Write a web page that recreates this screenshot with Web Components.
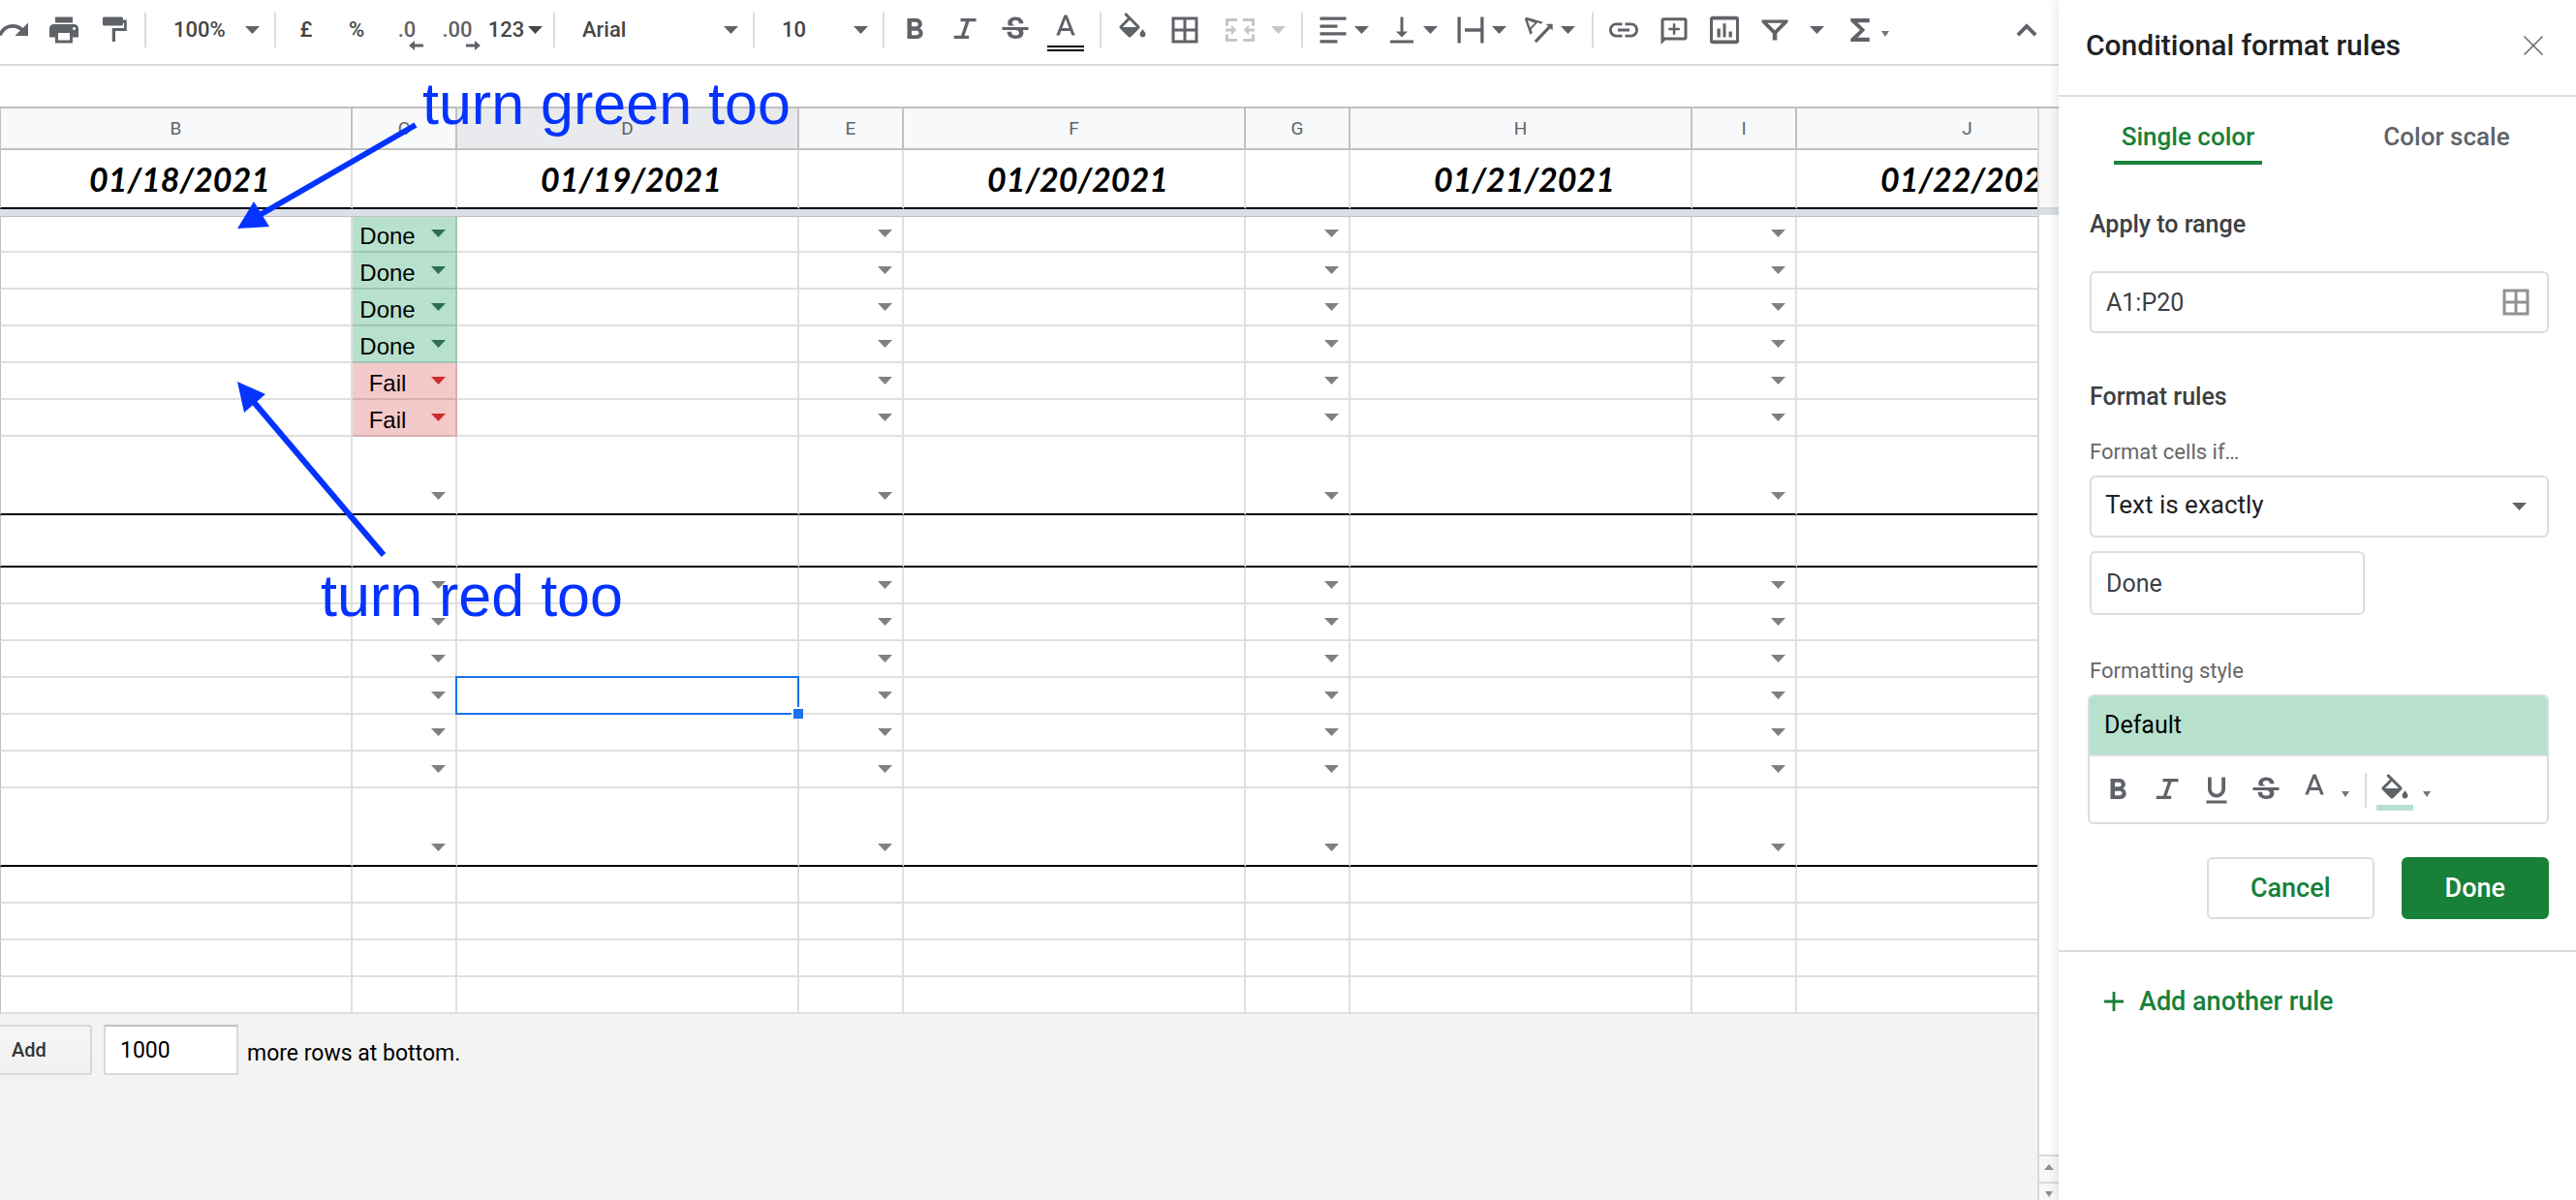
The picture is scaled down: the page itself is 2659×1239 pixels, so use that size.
<!DOCTYPE html>
<html lang="en">
<head>
<meta charset="utf-8">
<title>Spreadsheet</title>
<style>
    body {
        margin: 0;
        font-family: Roboto, "Liberation Sans", sans-serif;
        color: #202124;
        background: #fff;
    }
</style>
</head>
<body>
<sheet-app></sheet-app>

<script>
// Icon artwork, keyed by name: [viewBox width, viewBox height, markup]
const ICONS = {
    redo: [24, 24, '<path d="M18.4 10.6C16.55 8.99 14.15 8 11.5 8c-4.65 0-8.58 3.03-9.96 7.22L3.9 16c1.05-3.19 4.05-5.5 7.6-5.5 1.95 0 3.73.72 5.12 1.88L13 16h9V7l-3.6 3.6z"/>'],
    print: [24, 24, '<path d="M19 8H5c-1.66 0-3 1.34-3 3v6h4v4h12v-4h4v-6c0-1.66-1.34-3-3-3zm-3 11H8v-5h8v5zm3-7c-.55 0-1-.45-1-1s.45-1 1-1 1 .45 1 1-.45 1-1 1zm-1-9H6v4h12V3z"/>'],
    paint: [24, 24, '<path d="M18 5V4c0-.55-.45-1-1-1H5c-.55 0-1 .45-1 1v4c0 .55.45 1 1 1h12c.55 0 1-.45 1-1V7h.7v3.6H10.500V20h2.200v-7.300H20.500V5z"/>'],
    bold: [24, 24, '<path d="M15.6 10.79c.97-.67 1.65-1.77 1.65-2.79 0-2.26-1.75-4-4-4H7v14h7.04c2.09 0 3.71-1.7 3.71-3.79 0-1.52-.86-2.82-2.15-3.42zM10 6.5h3c.83 0 1.5.67 1.5 1.5s-.67 1.5-1.5 1.5h-3v-3zm3.5 9H10v-3h3.5c.83 0 1.500.67 1.500 1.500s-.67 1.500-1.500 1.500z"/>'],
    italic: [24, 24, '<path d="M9 4v2.200h3.600L9.300 15.800H4.500V18h10.300v-2.200h-3.100L15 6.200h4.700V4z"/>'],
    underline: [24, 24, '<path d="M12 17c3.310 0 6-2.690 6-6V3h-2.500v8c0 1.930-1.570 3.500-3.500 3.500S8.500 12.930 8.500 11V3H6v8c0 3.310 2.690 6 6 6zm-7 2v2h14v-2H5z"/>'],
    strike: [24, 24, '<path d="M7.24 8.75c-.26-.48-.39-1.03-.39-1.67 0-.61.13-1.16.4-1.67.26-.5.63-.93 1.11-1.29.48-.35 1.05-.63 1.7-.83.66-.19 1.39-.29 2.18-.29.81 0 1.54.11 2.21.34.66.22 1.23.54 1.69.94.47.4.83.88 1.08 1.43.25.55.38 1.15.38 1.81h-3.01c0-.31-.05-.59-.15-.85-.09-.27-.24-.49-.44-.68-.2-.19-.45-.33-.75-.44-.3-.1-.66-.16-1.06-.16-.39 0-.74.04-1.03.13-.29.09-.53.21-.72.36-.19.16-.34.34-.44.55-.1.21-.15.43-.15.66 0 .48.25.88.74 1.21.38.25.77.48 1.41.7H7.39c-.05-.08-.11-.17-.15-.25zM21 12v-2H3v2h9.62c.18.07.4.14.55.2.37.17.66.34.87.51.21.17.35.36.43.57.07.2.11.43.11.69 0 .23-.05.45-.14.66-.09.2-.23.38-.42.53-.19.15-.42.26-.71.35-.29.08-.63.13-1.01.13-.43 0-.83-.04-1.18-.13s-.66-.23-.91-.42c-.25-.19-.45-.44-.59-.75-.14-.31-.25-.76-.25-1.21H6.4c0 .55.08 1.13.24 1.58.16.45.37.85.65 1.21.28.35.6.66.98.92.37.26.78.48 1.22.65.44.17.9.3 1.38.39.48.08.96.13 1.44.13.8 0 1.53-.09 2.18-.28s1.21-.45 1.67-.79c.46-.34.82-.77 1.07-1.27s.38-1.07.38-1.71c0-.6-.1-1.14-.31-1.61-.05-.11-.11-.23-.17-.33H21z"/>'],
    color: [24, 24, '<path d="M11 3 5.500 17h2.250l1.120-3h6.250l1.120 3h2.250L13 3h-2zm-1.380 9L12 5.670 14.380 12H9.620z"/>'],
    fill: [24, 24, '<path d="M16.560 8.940 7.620 0 6.210 1.410l2.380 2.380-5.150 5.150c-.59.59-.59 1.540 0 2.120l5.500 5.500c.29.29.68.44 1.060.44s.77-.15 1.060-.44l5.500-5.500c.59-.58.59-1.530 0-2.120zM5.210 10 10 5.210 14.790 10H5.210zM19 11.500s-2 2.170-2 3.500c0 1.100.9 2 2 2s2-.9 2-2c0-1.330-2-3.500-2-3.500z"/>'],
    borders: [24, 24, '<path d="M3 3v18h18V3H3zm8 16H5v-6h6v6zm0-8H5V5h6v6zm8 8h-6v-6h6v6zm0-8h-6V5h6v6z"/>'],
    merge: [24, 24, '<path d="M2 4h8v2H4v3H2zM14 4h8v5h-2V6h-6zM2 15h2v3h6v2H2zM20 15h2v5h-8v-2h6zM2 11h4V8.500L9.500 12 6 15.500V13H2zM22 11h-4V8.500L14.500 12l3.500 3.500V13h4z"/>'],
    left: [24, 24, '<path d="M3 3h18v2.200H3zM3 8.300h12v2.200H3zM3 13.500h18v2.200H3zM3 18.800h12V21H3z"/>'],
    bottom: [24, 24, '<path d="M16 13h-3V3h-2v10H8l4 4 4-4zM4 19v2h16v-2H4z"/>'],
    overflow: [24, 24, '<path d="M3 3h2.200v18H3zM18.800 3H21v18h-2.200zM8 10.900h11v2.200H8z"/>'],
    rotate: [24, 24, '<path d="M16.500 7.800l1.500 1.600-9.500 10 1.500 1.400 9.500-10 1.600 1.500V7.800zM3 3.200l-1.100 1.200 3.800 11 1.500-1.500-.9-2.400 4.500-4.600 2.300 1 1.400-1.400zm.9 2.100 5 1.800-3.300 3.300z"/>'],
    link: [24, 24, '<path d="M3.900 12c0-1.710 1.390-3.100 3.100-3.100h4V7H7c-2.760 0-5 2.240-5 5s2.240 5 5 5h4v-1.900H7c-1.710 0-3.100-1.390-3.100-3.100zM8 13h8v-2H8v2zm9-6h-4v1.900h4c1.710 0 3.100 1.390 3.100 3.100s-1.390 3.100-3.100 3.100h-4V17h4c2.760 0 5-2.240 5-5s-2.240-5-5-5z"/>'],
    comment: [24, 24, '<path fill-rule="evenodd" d="M4.500 3.500h15c.8 0 1.500.7 1.500 1.500v12.500c0 .8-.7 1.500-1.500 1.500H6l-3 3V5c0-.8.7-1.500 1.500-1.500zM5 5.500V17h14V5.500zM11.200 7.500h1.700v3h3v1.700h-3v3h-1.700v-3h-3v-1.700h3z"/>'],
    chart: [24, 24, '<path fill-rule="evenodd" d="M4 2.500h16c1 0 2 .7 2 1.600v15.800c0 .9-1 1.600-2 1.600H4c-1 0-2-.7-2-1.600V4.100c0-.9 1-1.600 2-1.600zM4 5v14h16V5zM7 11h2.200v6H7zM11 7.500h2V17h-2zM15 13h2.200v4H15z"/>'],
    filter: [24, 24, '<path fill-rule="evenodd" d="M3 5h18v1.700l-7.500 7.600V19h-3v-4.700L3 6.700zM7 7.200l5 5 5-5z"/>'],
    sum: [24, 24, '<path d="M18.500 4H5.500v2l6.500 6-6.500 6v2h13v-2.800H10.300l5.200-5.200-5.200-5.200h8.200z"/>'],
    up: [24, 24, '<path d="M12 7.500l-7 7L6.800 16.400 12 11.200l5.200 5.200L19 14.500z"/>'],
    close: [20, 20, '<path d="M1 0 10 9l9-9 1 1-9 9 9 9-1 1-9-9-9 9-1-1 9-9-9-9z"/>'],
    plus: [20, 20, '<path d="M8.600 0h2.800v8.600H20v2.800h-8.600V20H8.600v-8.600H0V8.600h8.600z"/>'],
    down: [15, 8, '<path d="M0 0h15L7.500 8z"/>'],
    mini: [8, 6, '<path d="M0 0h8L4 6z"/>'],
    rise: [10, 6, '<path d="M0 6h10L5 0z"/>'],
    moveLeft: [15, 10, '<path d="M0 5l6-5v3.500h9v3H6V10z"/>'],
    moveRight: [15, 10, '<path d="M15 5 9 0v3.500H0v3h9V10z"/>']
};

class UiIcon extends HTMLElement {
    connectedCallback() {
        const [w, h, art] = ICONS[this.getAttribute('name')];
        const scale = w === 24 ? 36 / 24 : 1;
        this.attachShadow({ mode: 'open' }).innerHTML = `
            <style>
                :host { display: block; flex: none; }
                svg { display: block; fill: currentColor; }
            </style>
            <svg width="${w * scale}" height="${h * scale}" viewBox="0 0 ${w} ${h}" aria-hidden="true">${art}</svg>
        `;
    }
}
customElements.define('ui-icon', UiIcon);

// Button for toolbars; the "arrow" attribute adds a drop-down arrow
class ToolButton extends HTMLElement {
    connectedCallback() {
        const arrow = this.getAttribute('arrow');
        this.attachShadow({ mode: 'open' }).innerHTML = `
            <style>
                :host { display: block; flex: none; width: 52px; color: #5f6368; }
                :host([arrow]) { width: 71px; }
                :host([size="54"]) { width: 54px; }
                :host([size="68"]) { width: 68px; }
                :host([size="88"]) { width: 88px; }
                :host([size="34"]) { width: 34px; }
                :host([disabled]) { color: #c4c6c8; }
                button {
                    display: flex;
                    align-items: center;
                    justify-content: center;
                    gap: var(--arrow-gap, 4px);
                    width: 100%;
                    height: 48px;
                    padding: 0;
                    border: 0;
                    background: none;
                    color: inherit;
                    font: 500 22px/26px Roboto, sans-serif;
                }
                :host([size="88"]) button { gap: 14px; }
                .mini { padding-top: 8px; color: #777; }
            </style>
            <button type="button" aria-label="${this.getAttribute('label')}" ${this.hasAttribute('disabled') ? 'disabled' : ''}>
                <slot></slot>${arrow ? `<ui-icon class="${arrow}" name="${arrow}"></ui-icon>` : ''}
            </button>
        `;
    }
}
customElements.define('tool-button', ToolButton);

// Drop-down without the native arrow
class ToolSelect extends HTMLElement {
    connectedCallback() {
        this.attachShadow({ mode: 'open' }).innerHTML = `
            <style>
                :host { display: grid; flex: none; width: 122px; align-items: center; color: #444746; }
                :host([size="font"]) { width: 194px; }
                select {
                    grid-area: 1 / 1;
                    appearance: none;
                    width: 100%;
                    height: 48px;
                    padding: 0 23px;
                    border: 0;
                    background: none;
                    color: inherit;
                    font: 500 22px/26px Roboto, sans-serif;
                }
                ui-icon { grid-area: 1 / 1; justify-self: end; margin-right: 10px; color: #5f6368; pointer-events: none; }
            </style>
            <select aria-label="${this.getAttribute('label')}"><option>${this.getAttribute('value')}</option></select>
            <ui-icon name="down"></ui-icon>
        `;
    }
}
customElements.define('tool-select', ToolSelect);

class ToolBar extends HTMLElement {
    constructor() {
        super();
        this.attachShadow({ mode: 'open' }).innerHTML = `
            <style>
                :host {
                    display: flex;
                    align-items: center;
                    height: 62px;
                    padding-bottom: 4px;
                    border-bottom: 2px solid #dadce0;
                    overflow: hidden;
                }
                .group { display: flex; align-items: center; }
                .group:first-of-type { margin-left: -12px; }
                .group + .group::before {
                    content: "";
                    width: 2px;
                    height: 36px;
                    margin: 0 5px;
                    background: #dadce0;
                }
                .spaced { margin-right: 4px; }
                .text { color: #444746; }
                .decimal { display: grid; justify-items: end; padding-top: 8px; }
                .decimal ui-icon { margin: -2px -8px 0 0; }
                .swatch { display: grid; justify-items: center; padding-top: 2px; }
                .swatch::after {
                    content: "";
                    width: 38px;
                    height: 2px;
                    border: solid #000;
                    border-width: 2px 0;
                }
                .end { margin-left: auto; margin-right: 16px; }
            </style>
            <div class="group">
                <tool-button label="Redo"><ui-icon name="redo"></ui-icon></tool-button>
                <tool-button label="Print"><ui-icon name="print"></ui-icon></tool-button>
                <tool-button label="Paint format"><ui-icon name="paint"></ui-icon></tool-button>
            </div>
            <div class="group"><tool-select label="Zoom" value="100%"></tool-select></div>
            <div class="group">
                <tool-button class="text" label="Currency">£</tool-button>
                <tool-button class="text" label="Percent">%</tool-button>
                <tool-button label="Fewer decimals"><span class="decimal">.0<ui-icon name="moveLeft"></ui-icon></span></tool-button>
                <tool-button label="More decimals"><span class="decimal">.00<ui-icon name="moveRight"></ui-icon></span></tool-button>
                <tool-button class="text" label="More formats" arrow="down" size="68">123</tool-button>
            </div>
            <div class="group"><tool-select label="Font" size="font" value="Arial"></tool-select></div>
            <div class="group"><tool-select label="Font size" value="10"></tool-select></div>
            <div class="group spaced">
                <tool-button label="Bold"><ui-icon name="bold"></ui-icon></tool-button>
                <tool-button label="Italic"><ui-icon name="italic"></ui-icon></tool-button>
                <tool-button label="Strikethrough"><ui-icon name="strike"></ui-icon></tool-button>
                <tool-button label="Text color"><span class="swatch"><ui-icon name="color"></ui-icon></span></tool-button>
            </div>
            <div class="group">
                <tool-button label="Fill color" size="54"><ui-icon name="fill"></ui-icon></tool-button>
                <tool-button label="Borders" size="54"><ui-icon name="borders"></ui-icon></tool-button>
                <tool-button label="Merge cells" size="88" arrow="down" disabled><ui-icon name="merge"></ui-icon></tool-button>
            </div>
            <div class="group spaced">
                <tool-button label="Horizontal align" arrow="down"><ui-icon name="left"></ui-icon></tool-button>
                <tool-button label="Vertical align" arrow="down"><ui-icon name="bottom"></ui-icon></tool-button>
                <tool-button label="Text wrapping" arrow="down"><ui-icon name="overflow"></ui-icon></tool-button>
                <tool-button label="Text rotation" arrow="down"><ui-icon name="rotate"></ui-icon></tool-button>
            </div>
            <div class="group">
                <tool-button label="Insert link"><ui-icon name="link"></ui-icon></tool-button>
                <tool-button label="Insert comment"><ui-icon name="comment"></ui-icon></tool-button>
                <tool-button label="Insert chart"><ui-icon name="chart"></ui-icon></tool-button>
                <tool-button label="Filter"><ui-icon name="filter"></ui-icon></tool-button>
                <tool-button label="Filter views" size="34"><ui-icon name="down"></ui-icon></tool-button>
                <tool-button label="Functions" arrow="mini" size="68"><ui-icon name="sum"></ui-icon></tool-button>
            </div>
            <tool-button class="end" label="Hide menus" size="34"><ui-icon name="up"></ui-icon></tool-button>
        `;
    }
}
customElements.define('tool-bar', ToolBar);

// Cell value with the list arrow of data validation
class CellPicker extends HTMLElement {
    connectedCallback() {
        const value = this.getAttribute('value') || '';
        this.attachShadow({ mode: 'open' }).innerHTML = `
            <style>
                :host {
                    display: flex;
                    align-items: flex-end;
                    height: 34px;
                    color: #808080;
                }
                :host([value="Done"]) { color: #2f6e50; }
                :host([value="Fail"]) { color: #d02c2c; }
                span {
                    flex: 1;
                    padding-bottom: 1px;
                    color: #000;
                    font: 24px/28px "Liberation Sans", Arial, sans-serif;
                    text-align: center;
                }
                button {
                    padding: 0 10px 14px 9px;
                    border: 0;
                    background: none;
                    color: inherit;
                }
            </style>
            <span>${value}</span>
            <button type="button" aria-label="Open list"><ui-icon name="down"></ui-icon></button>
        `;
    }
}
customElements.define('cell-picker', CellPicker);

const COLUMNS = ['B', 'C', 'D', 'E', 'F', 'G', 'H', 'I', 'J'];
const DATES = { B: '01/18/2021', D: '01/19/2021', F: '01/20/2021', H: '01/21/2021', J: '01/22/2021' };

// kind: list = row with pickers, tall/thick set the height and bottom rule
const ROWS = [
    { kind: 'list first', value: 'Done' },
    { kind: 'list', value: 'Done' },
    { kind: 'list', value: 'Done' },
    { kind: 'list', value: 'Done' },
    { kind: 'list', value: 'Fail' },
    { kind: 'list', value: 'Fail' },
    { kind: 'list tall thick' },
    { kind: 'gap thick' },
    { kind: 'list' },
    { kind: 'list' },
    { kind: 'list' },
    { kind: 'list', selected: 'D' },
    { kind: 'list' },
    { kind: 'list' },
    { kind: 'list tall thick' },
    { kind: '' },
    { kind: '' },
    { kind: '' },
    { kind: '' }
];

class SheetGrid extends HTMLElement {
    constructor() {
        super();
        this.attachShadow({ mode: 'open' }).innerHTML = `
            <style>
                :host { display: block; overflow: hidden; background: #f3f3f3; }
                table {
                    width: 2208px;
                    table-layout: fixed;
                    border-collapse: separate;
                    border-spacing: 0;
                    background: #fff;
                }
                .first-col { width: 364px; }
                .wide { width: 353px; }
                .slim { width: 108px; }
                th, td {
                    box-sizing: border-box;
                    height: 38px;
                    padding: 0;
                    border: solid rgba(0, 0, 0, .12);
                    border-width: 0 2px 2px 0;
                    vertical-align: bottom;
                }
                th:first-child, td:first-child { border-left: 1px solid #c0c0c0; }
                thead th {
                    height: 43px;
                    border-color: #c0c0c0;
                    background: #f8f9fa;
                    color: #5f6368;
                    font: 19px/24px Roboto, sans-serif;
                    vertical-align: middle;
                }
                thead th.active { background: #e8eaed; }
                .dates td {
                    height: 61px;
                    padding-left: 8px;
                    border-bottom-color: #000;
                    color: #000;
                    font: italic 700 34px/40px Lato, sans-serif;
                    text-align: center;
                    vertical-align: middle;
                }
                .freeze td {
                    height: 8px;
                    border: 0;
                    border-bottom: 1px solid #c0c0c0;
                    background: #dcdfea;
                }
                .first td { height: 37px; }
                .tall td { height: 81px; }
                .gap td { height: 54px; }
                .thick td { border-bottom-color: #000; }
                .done { background: #b7e1cd; }
                .fail { background: #f4c9c9; }
                .selected { position: relative; }
                .selected::before {
                    content: "";
                    position: absolute;
                    inset: -2px;
                    border: 2px solid #1a73e8;
                }
                .selected::after {
                    content: "";
                    position: absolute;
                    right: -6px;
                    bottom: -6px;
                    width: 10px;
                    height: 10px;
                    border: solid #fff;
                    border-width: 2px 0 0 2px;
                    background: #1a73e8;
                }
            </style>
            <table>
                <colgroup>${COLUMNS.map((c, i) => `<col class="${i === 0 ? 'first-col' : i % 2 ? 'slim' : 'wide'}">`).join('')}</colgroup>
                <thead><tr>${COLUMNS.map(c => `<th scope="col" class="${c === 'D' ? 'active' : ''}">${c}</th>`).join('')}</tr></thead>
                <tbody>
                    <tr class="dates">${COLUMNS.map(c => `<td>${DATES[c] || ''}</td>`).join('')}</tr>
                    <tr class="freeze"><td colspan="9"></td></tr>
                    ${ROWS.map(row => this.renderRow(row)).join('')}
                </tbody>
            </table>
            <slot></slot>
        `;
    }

    renderRow(row) {
        const cells = COLUMNS.map((column, i) => {
            const value = column === 'C' && row.value ? row.value : '';
            const name = value ? value.toLowerCase() : row.selected === column ? 'selected' : '';
            const picker = i % 2 && row.kind.includes('list') ? `<cell-picker value="${value}"></cell-picker>` : '';
            return `<td class="${name}">${picker}</td>`;
        });
        return `<tr class="${row.kind}">${cells.join('')}</tr>`;
    }
}
customElements.define('sheet-grid', SheetGrid);

class AddRows extends HTMLElement {
    constructor() {
        super();
        this.attachShadow({ mode: 'open' }).innerHTML = `
            <style>
                :host { display: flex; align-items: center; padding-top: 11px; color: #000; }
                button, input { box-sizing: border-box; height: 52px; border: 2px solid #d9d9d9; }
                button {
                    width: 105px;
                    margin-left: -10px;
                    padding: 0 20px;
                    border-radius: 3px;
                    background: linear-gradient(#f5f5f5, #f1f1f1);
                    color: #333;
                    font: 500 20px/24px Roboto, sans-serif;
                    text-align: left;
                }
                input {
                    width: 139px;
                    margin: 0 9px 0 12px;
                    padding: 0 15px;
                    border-top-color: #c0c0c0;
                    background: #fff;
                    color: #000;
                    font: 23px/28px Roboto, sans-serif;
                }
                label { padding-top: 8px; font-size: 23px; line-height: 28px; }
            </style>
            <button type="button">Add</button>
            <input id="count" value="1000">
            <label for="count">more rows at bottom.</label>
        `;
    }
}
customElements.define('add-rows', AddRows);

class SheetScroll extends HTMLElement {
    constructor() {
        super();
        this.attachShadow({ mode: 'open' }).innerHTML = `
            <style>
                :host {
                    display: flex;
                    flex-direction: column;
                    width: 20px;
                    border-left: 2px solid #d9d9d9;
                }
                .head { height: 102px; border-bottom: 2px solid #d9d9d9; background: #f8f8f8; }
                .band { height: 6px; background: #dadfe8; }
                .track { flex: 1; }
                button {
                    display: flex;
                    justify-content: center;
                    box-sizing: border-box;
                    height: 28px;
                    padding: 8px 0 0;
                    border: 0;
                    border-top: 2px solid #d9d9d9;
                    background: #f8f8f8;
                    color: #909090;
                }
                button:last-child { height: 19px; }
            </style>
            <div class="head"></div>
            <div class="band"></div>
            <div class="track"></div>
            <button type="button" aria-label="Scroll up"><ui-icon name="rise"></ui-icon></button>
            <button type="button" aria-label="Scroll down"><ui-icon name="mini"></ui-icon></button>
        `;
    }
}
customElements.define('sheet-scroll', SheetScroll);

// Hand-placed remarks that float over the sheet
class SheetNotes extends HTMLElement {
    constructor() {
        super();
        this.attachShadow({ mode: 'open' }).innerHTML = `
            <style>
                :host {
                    position: absolute;
                    top: 0;
                    left: 0;
                    color: #0433ff;
                    font: 61px/68px "Liberation Sans", Arial, sans-serif;
                    white-space: nowrap;
                    pointer-events: none;
                }
                svg { display: block; fill: currentColor; stroke: currentColor; }
                span { position: absolute; }
                .green { top: 73px; left: 436px; }
                .red { top: 581px; left: 331px; }
            </style>
            <svg width="700" height="660" viewBox="0 0 700 660" aria-hidden="true">
                <path d="M429 129 268 222M396 573 261 414" stroke-width="6"/>
                <path d="M245 236 262 208 278 234zM245 394 274 407 252 426z" stroke="none"/>
            </svg>
            <span class="green">turn green too</span>
            <span class="red">turn red too</span>
        `;
    }
}
customElements.define('sheet-notes', SheetNotes);

class RulesPanel extends HTMLElement {
    constructor() {
        super();
        this.attachShadow({ mode: 'open' }).innerHTML = `
            <style>
                :host {
                    display: block;
                    background: #fff;
                    box-shadow: 0 0 12px rgba(0, 0, 0, .14);
                    font-size: 25px;
                    line-height: 30px;
                }
                header {
                    display: flex;
                    align-items: center;
                    justify-content: space-between;
                    height: 94px;
                    padding: 0 34px 4px 28px;
                    border-bottom: 2px solid #dadce0;
                }
                h2 { margin: 0; font-size: 30px; font-weight: 500; line-height: 34px; }
                h3 { margin: 0; color: #3c4043; font-size: 25px; font-weight: 500; line-height: 30px; }
                button { font: 500 27px/30px Roboto, sans-serif; }
                .close { padding: 0; border: 0; background: none; color: #5f6368; }
                nav { display: grid; grid-template-columns: 1fr 1fr; justify-items: center; height: 70px; }
                nav button {
                    padding: 16px 8px 0;
                    border: 0;
                    border-bottom: 4px solid transparent;
                    border-radius: 2px 2px 0 0;
                    background: none;
                    color: #5f6368;
                    font-size: 26px;
                }
                nav .current { border-color: #188038; color: #188038; }
                form { display: block; padding: 47px 28px 32px 32px; border-bottom: 2px solid #dadce0; }
                .box {
                    display: grid;
                    align-items: center;
                    box-sizing: border-box;
                    height: 64px;
                    border: 2px solid #dadce0;
                    border-radius: 6px;
                }
                .box > * { grid-area: 1 / 1; }
                .box ui-icon { justify-self: end; margin-right: 14px; color: #909294; pointer-events: none; }
                .box ui-icon[name="down"] { margin-right: 21px; color: #5f6368; }
                input, select {
                    appearance: none;
                    box-sizing: border-box;
                    width: 100%;
                    height: 60px;
                    padding: 0 15px;
                    border: 0;
                    background: none;
                    color: #3c4043;
                    font: 25px/30px Roboto, sans-serif;
                }
                select { padding: 0 14px 4px; color: #202124; font-size: 26px; }
                .box.short { width: 284px; height: 66px; margin-top: 14px; }
                .label { display: block; margin-bottom: 11px; color: #666; font-size: 22px; line-height: 26px; }
                .range { margin: 33px 0 51px; }
                .cond { margin-top: 29px; }
                .style { margin-top: 45px; }
                .preview { margin-left: -2px; border: 2px solid #dadce0; border-radius: 6px; overflow: hidden; }
                .sample { padding: 15px; background: #b7e1cd; border-bottom: 2px solid #dadce0; color: #000; }
                .tools {
                    --arrow-gap: 10px;
                    display: flex;
                    align-items: center;
                    height: 66px;
                    padding: 2px 3px 0;
                    color: #5f6368;
                }
                .tools tool-button { width: 51px; }
                .tools tool-button[arrow] { width: 68px; }
                .rule { width: 2px; height: 36px; margin: 0 4px 0 9px; background: #dadce0; }
                .raised { padding-bottom: 6px; }
                .filled { display: grid; justify-items: center; padding-top: 4px; }
                .filled::after { content: ""; width: 38px; height: 6px; margin-top: -4px; background: #b7e1cd; }
                .actions { display: flex; justify-content: flex-end; gap: 28px; margin-top: 34px; }
                .actions button {
                    height: 64px;
                    padding: 0 43px;
                    border: 2px solid #dadce0;
                    border-radius: 6px;
                    background: #fff;
                    color: #188038;
                }
                .actions .primary { border-color: #188038; background: #188038; color: #fff; }
                .add {
                    display: flex;
                    align-items: center;
                    gap: 16px;
                    margin: 36px 0 0 47px;
                    padding: 0;
                    border: 0;
                    background: none;
                    color: #188038;
                }
            </style>
            <header>
                <h2>Conditional format rules</h2>
                <button class="close" type="button" aria-label="Close"><ui-icon name="close"></ui-icon></button>
            </header>
            <nav>
                <button class="current" type="button">Single color</button>
                <button type="button">Color scale</button>
            </nav>
            <form>
                <h3><label for="range">Apply to range</label></h3>
                <div class="box range"><input id="range" value="A1:P20"><ui-icon name="borders"></ui-icon></div>
                <h3>Format rules</h3>
                <label class="label cond" for="condition">Format cells if…</label>
                <div class="box">
                    <select id="condition"><option>Text is exactly</option></select>
                    <ui-icon name="down"></ui-icon>
                </div>
                <div class="box short"><input aria-label="Value" value="Done"></div>
                <div class="label style">Formatting style</div>
                <div class="preview">
                    <div class="sample">Default</div>
                    <div class="tools">
                        <tool-button label="Bold"><ui-icon name="bold"></ui-icon></tool-button>
                        <tool-button label="Italic"><ui-icon name="italic"></ui-icon></tool-button>
                        <tool-button label="Underline"><ui-icon name="underline"></ui-icon></tool-button>
                        <tool-button label="Strikethrough"><ui-icon name="strike"></ui-icon></tool-button>
                        <tool-button label="Text color" arrow="mini"><ui-icon class="raised" name="color"></ui-icon></tool-button>
                        <div class="rule"></div>
                        <tool-button label="Fill color" arrow="mini"><span class="filled"><ui-icon name="fill"></ui-icon></span></tool-button>
                    </div>
                </div>
                <div class="actions">
                    <button type="button">Cancel</button>
                    <button class="primary" type="button">Done</button>
                </div>
            </form>
            <button class="add" type="button"><ui-icon name="plus"></ui-icon>Add another rule</button>
        `;
    }
}
customElements.define('rules-panel', RulesPanel);

class SheetApp extends HTMLElement {
    constructor() {
        super();
        this.attachShadow({ mode: 'open' }).innerHTML = `
            <style>
                :host {
                    display: grid;
                    grid-template-columns: minmax(0, 1fr) 534px;
                    position: relative;
                    height: 100vh;
                    overflow: hidden;
                }
                main { display: flex; flex-direction: column; min-height: 0; }
                .formula { height: 42px; border-bottom: 2px solid #c0c0c0; }
                .sheet { display: flex; flex: 1; min-height: 0; }
                sheet-grid { flex: 1; min-width: 0; }
            </style>
            <main>
                <tool-bar></tool-bar>
                <div class="formula"></div>
                <div class="sheet">
                    <sheet-grid><add-rows></add-rows></sheet-grid>
                    <sheet-scroll></sheet-scroll>
                </div>
            </main>
            <rules-panel></rules-panel>
            <sheet-notes></sheet-notes>
        `;
    }
}
customElements.define('sheet-app', SheetApp);
</script>
</body>
</html>
